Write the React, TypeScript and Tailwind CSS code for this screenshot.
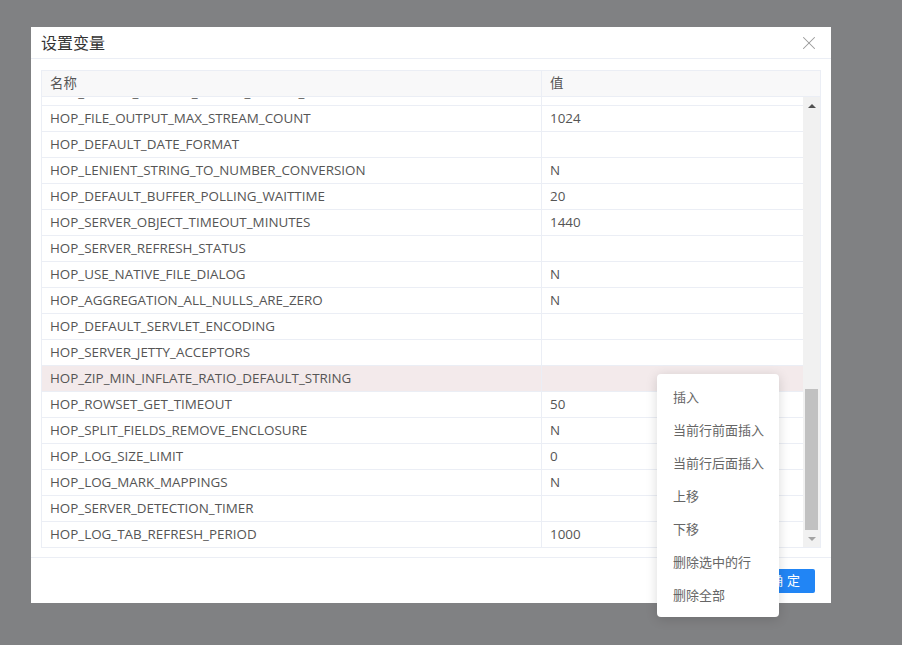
import { X } from "lucide-react";

const rows: [string, string][] = [
  ["HOP_FILE_OUTPUT_MAX_STREAM_COUNT", "1024"],
  ["HOP_DEFAULT_DATE_FORMAT", ""],
  ["HOP_LENIENT_STRING_TO_NUMBER_CONVERSION", "N"],
  ["HOP_DEFAULT_BUFFER_POLLING_WAITTIME", "20"],
  ["HOP_SERVER_OBJECT_TIMEOUT_MINUTES", "1440"],
  ["HOP_SERVER_REFRESH_STATUS", ""],
  ["HOP_USE_NATIVE_FILE_DIALOG", "N"],
  ["HOP_AGGREGATION_ALL_NULLS_ARE_ZERO", "N"],
  ["HOP_DEFAULT_SERVLET_ENCODING", ""],
  ["HOP_SERVER_JETTY_ACCEPTORS", ""],
  ["HOP_ZIP_MIN_INFLATE_RATIO_DEFAULT_STRING", ""],
  ["HOP_ROWSET_GET_TIMEOUT", "50"],
  ["HOP_SPLIT_FIELDS_REMOVE_ENCLOSURE", "N"],
  ["HOP_LOG_SIZE_LIMIT", "0"],
  ["HOP_LOG_MARK_MAPPINGS", "N"],
  ["HOP_SERVER_DETECTION_TIMER", ""],
  ["HOP_LOG_TAB_REFRESH_PERIOD", "1000"],
];

const menuItems = ["插入", "当前行前面插入", "当前行后面插入", "上移", "下移", "删除选中的行", "删除全部"];

const font = { fontFamily: '"Open Sans", "Noto Sans CJK SC", sans-serif' };

function Row({ name, value, active }: { name: string; value: string; active?: boolean }) {
  return (
    <div className={`flex h-[26px] border-b border-[#ebeef5] ${active ? "bg-[#f3eaeb]" : "bg-white"}`}>
      <div className="flex w-[500px] items-center truncate border-r border-[#ebeef5] px-[8px]">{name}</div>
      <div className="flex flex-1 items-center px-[8px]">{value}</div>
    </div>
  );
}

export default function App() {
  return (
    <div className="relative h-[645px] w-full overflow-hidden bg-[#808183] pl-[31px] pt-[27px] text-[13.4px] text-[#555]" style={font}>
      <div className="flex h-[576px] w-[800px] flex-col bg-white">
        <div className="flex h-[32px] items-center justify-between border-b border-[#ebeef5] pl-[10px] pr-[11px]">
          <span className="text-[16px] text-[#333]">设置变量</span>
          <X className="h-[22px] w-[22px] text-[#999]" strokeWidth={1.1} />
        </div>
        <div className="px-[10px] pt-[11px] pb-[9px]">
          <div className="w-[780px] border border-[#ebeef5]">
            <div className="flex h-[26px] border-b border-[#ebeef5] bg-[#f8f8f9]">
              <div className="flex w-[500px] items-center border-r border-[#ebeef5] px-[8px]">名称</div>
              <div className="flex flex-1 items-center px-[8px]">值</div>
            </div>
            <div className="flex h-[450px]">
              <div className="flex-1 overflow-hidden">
                <div className="-mt-[17px]">
                  <Row name="HOP_PLUGIN_CLASSES_SERVER_ACCEPT_TIMEOUT" value="" />
                  {rows.map(([n, v], i) => (
                    <Row key={n} name={n} value={v} active={i === 10} />
                  ))}
                </div>
              </div>
              <div className="flex w-[17px] flex-col items-center bg-[#f1f1f1]">
                <div className="flex h-[17px] w-full items-center justify-center">
                  <div className="h-0 w-0 border-x-[4px] border-b-[4px] border-x-transparent border-b-[#505050]" />
                </div>
                <div className="flex w-full flex-1 flex-col justify-end">
                  <div className="mx-[2px] h-[141px] bg-[#c1c1c1]" />
                </div>
                <div className="flex h-[17px] w-full items-center justify-center">
                  <div className="h-0 w-0 border-x-[4px] border-t-[4px] border-x-transparent border-t-[#a3a3a3]" />
                </div>
              </div>
            </div>
          </div>
        </div>
        <div className="flex flex-1 items-center justify-end border-t border-[#ebeef5] pr-[16px]">
          <button className="h-[24px] w-[56px] rounded-[2px] bg-[#2185f5] text-[13px] tracking-[4px] text-white">确定</button>
        </div>
      </div>

      <div className="absolute left-[657px] top-[374px] w-[122px] rounded-[4px] bg-white pt-[7px] pb-[5px] shadow-[0_2px_12px_rgba(0,0,0,0.15)]">
        {menuItems.map((m) => (
          <div key={m} className="flex h-[33px] items-center pl-[16px] text-[13px] text-[#666]">
            {m}
          </div>
        ))}
      </div>
    </div>
  );
}
